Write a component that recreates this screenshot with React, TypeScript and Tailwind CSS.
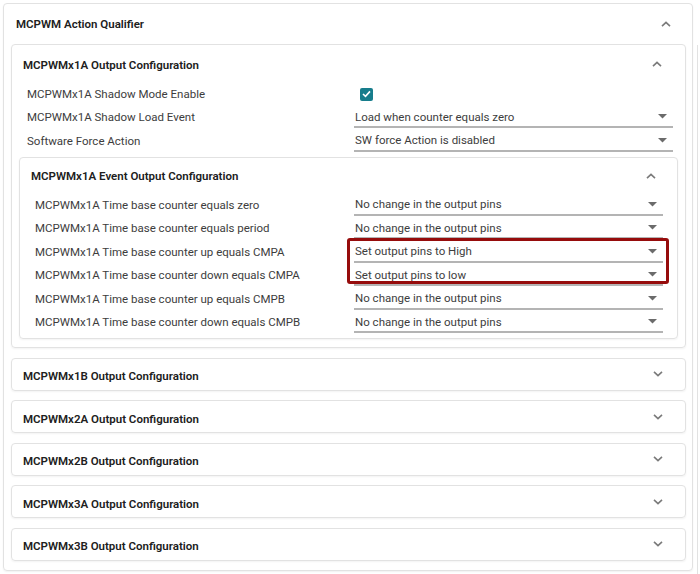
const ChevronUp = () => (
  <svg width="10" height="6" viewBox="0 0 10 6" className="text-[#7a7a7a]">
    <path d="M1 5.2 L5 1.4 L9 5.2" fill="none" stroke="currentColor" strokeWidth="1.6" />
  </svg>
);

const ChevronDown = () => (
  <svg width="10" height="6" viewBox="0 0 10 6" className="text-[#7a7a7a]">
    <path d="M1 0.8 L5 4.6 L9 0.8" fill="none" stroke="currentColor" strokeWidth="1.6" />
  </svg>
);

const Select = ({ value }: { value: string }) => (
  <div className="flex h-[21px] w-full items-center justify-between border-b-2 border-[#b4b4b4] pl-[1px] pr-[6px]">
    <span className="pt-[2px] text-[11.5px] text-[#3d3d3d]">{value}</span>
    <svg width="9" height="5" viewBox="0 0 9 5">
      <path d="M0 0 L9 0 L4.5 4.5 Z" fill="#6b6b6b" />
    </svg>
  </div>
);

const Row = ({ label, labelW, children }: { label: string; labelW: string; children: React.ReactNode }) => (
  <div className="flex h-[23.5px] items-start">
    <div className={`${labelW} shrink-0 pt-[2.5px] text-[11.5px] text-[#3d3d3d]`}>{label}</div>
    <div className="flex-1 pt-[0.5px]">{children}</div>
  </div>
);

const collapsed = [
  "MCPWMx1B Output Configuration",
  "MCPWMx2A Output Configuration",
  "MCPWMx2B Output Configuration",
  "MCPWMx3A Output Configuration",
  "MCPWMx3B Output Configuration",
];

const events = [
  ["MCPWMx1A Time base counter equals zero", "No change in the output pins"],
  ["MCPWMx1A Time base counter equals period", "No change in the output pins"],
  ["MCPWMx1A Time base counter up equals CMPA", "Set output pins to High"],
  ["MCPWMx1A Time base counter down equals CMPA", "Set output pins to low"],
  ["MCPWMx1A Time base counter up equals CMPB", "No change in the output pins"],
  ["MCPWMx1A Time base counter down equals CMPB", "No change in the output pins"],
];

export default function App() {
  return (
    <div className="flex h-[574px] w-[700px] overflow-hidden bg-white font-['Roboto',sans-serif]">
      {/* Action Qualifier card */}
      <div className="ml-[3px] mt-[3px] flex h-[568px] w-[690px] flex-col rounded-[4px] border border-[#e2e2e2] shadow-[0_1px_2px_rgba(0,0,0,0.06)]">
        <div className="flex h-[40px] shrink-0 items-center justify-between pl-[12px] pr-[21px]">
          <span className="pt-[1px] text-[11.5px] font-semibold text-[#202020]">MCPWM Action Qualifier</span>
          <ChevronUp />
        </div>

        <div className="flex flex-col gap-[9.5px] pl-[7px] pr-[6px]">
          {/* 1A expanded */}
          <div className="flex flex-col rounded-[4px] border border-[#e2e2e2] px-[7px] pb-[8px] shadow-[0_1px_2px_rgba(0,0,0,0.05)]">
            <div className="flex h-[38px] items-center justify-between pl-[4px] pr-[16px]">
              <span className="pt-[3px] text-[11.5px] font-semibold text-[#202020]">MCPWMx1A Output Configuration</span>
              <ChevronUp />
            </div>
            <div className="flex flex-col pl-[8px] pr-[5px]">
              <Row label="MCPWMx1A Shadow Mode Enable" labelW="w-[327px]">
                <div className="flex h-[21px] items-center pl-[6px]">
                  <div className="flex h-[13px] w-[13px] items-center justify-center rounded-[2px] bg-[#177d8c]">
                    <svg width="9" height="8" viewBox="0 0 9 8">
                      <path d="M1 4 L3.5 6.4 L8 1.4" fill="none" stroke="#fff" strokeWidth="1.6" />
                    </svg>
                  </div>
                </div>
              </Row>
              <Row label="MCPWMx1A Shadow Load Event" labelW="w-[327px]">
                <Select value="Load when counter equals zero" />
              </Row>
              <Row label="Software Force Action" labelW="w-[327px]">
                <Select value="SW force Action is disabled" />
              </Row>
            </div>

            {/* Event output card */}
            <div className="relative mt-[3.5px] flex flex-col rounded-[4px] border border-[#e2e2e2] pb-[3px] shadow-[0_1px_2px_rgba(0,0,0,0.05)]">
              <div className="flex h-[36px] items-center justify-between pl-[11px] pr-[21px]">
                <span className="pt-[2px] text-[11.5px] font-semibold text-[#202020]">MCPWMx1A Event Output Configuration</span>
                <ChevronUp />
              </div>
              <div className="flex flex-col pl-[15px] pr-[14px]">
                {events.map(([l, v]) => (
                  <Row key={l} label={l} labelW="w-[319px]">
                    <Select value={v} />
                  </Row>
                ))}
              </div>
              {/* highlight annotation */}
              <div className="absolute left-[327px] top-[80px] h-[46px] w-[322px] rounded-[3px] border-[3px] border-[#960c0c]" />
            </div>
          </div>

          {collapsed.map((t) => (
            <div
              key={t}
              className="flex h-[33px] items-center justify-between rounded-[4px] border border-[#e2e2e2] pl-[11px] pr-[22px] shadow-[0_1px_2px_rgba(0,0,0,0.05)]"
            >
              <span className="pt-[6px] text-[11.5px] font-semibold text-[#202020]">{t}</span>
              <ChevronDown />
            </div>
          ))}
        </div>
      </div>
      <div className="ml-[4px] mt-[45px] h-full border-l border-[#e2e2e2]" />
    </div>
  );
}
